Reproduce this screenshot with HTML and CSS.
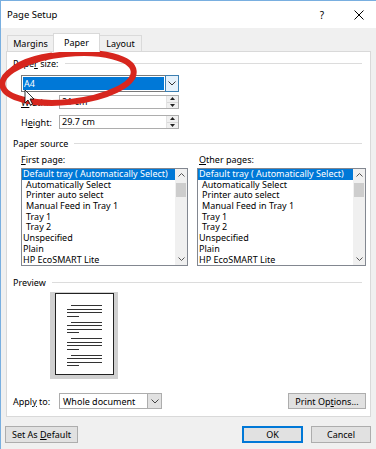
FILE: index.html
```html
<!DOCTYPE html>
<html lang="en">
<head>
    <meta charset="utf-8">
    <title>Page Setup</title>
    <link rel="stylesheet" href="styles.css">
</head>
<body>
    <div class="dialog">
        <div class="titlebar">
            <span class="title">Page Setup</span>
            <span class="help">?</span>
            <svg class="close" width="10" height="10" viewBox="0 0 10 10">
                <path d="M0.5 0.5L9.5 9.5M9.5 0.5L0.5 9.5" stroke="#000" stroke-width="1" fill="none"/>
            </svg>
        </div>

        <div class="tabs">
            <div class="tab">Margins</div>
            <div class="tab active">Paper</div>
            <div class="tab">Layout</div>
        </div>

        <div class="panel">
            <div class="group"><span>Pape<u>r</u> size:</span><i></i></div>
            <div class="combo combo-size">
                <div class="combo-value"><span class="sel">A4</span></div>
                <div class="combo-arrow blue">
                    <svg width="8" height="5" viewBox="0 0 8 5"><path d="M0.5 0.5L4 4L7.5 0.5" stroke="#333" fill="none"/></svg>
                </div>
            </div>
            <div class="field">
                <label><u>W</u>idth:</label>
                <div class="spin">
                    <span class="spin-value">21 cm</span>
                    <div class="spin-btns">
                        <div class="spin-btn"><svg width="5" height="3" viewBox="0 0 5 3"><path d="M2.5 0L5 3H0Z" fill="#222"/></svg></div>
                        <div class="spin-btn"><svg width="5" height="3" viewBox="0 0 5 3"><path d="M0 0H5L2.5 3Z" fill="#222"/></svg></div>
                    </div>
                </div>
            </div>
            <div class="field">
                <label>H<u>e</u>ight:</label>
                <div class="spin">
                    <span class="spin-value">29.7 cm</span>
                    <div class="spin-btns">
                        <div class="spin-btn"><svg width="5" height="3" viewBox="0 0 5 3"><path d="M2.5 0L5 3H0Z" fill="#222"/></svg></div>
                        <div class="spin-btn"><svg width="5" height="3" viewBox="0 0 5 3"><path d="M0 0H5L2.5 3Z" fill="#222"/></svg></div>
                    </div>
                </div>
            </div>

            <div class="group source"><span>Paper source</span><i></i></div>
            <div class="lists">
                <div class="list-col">
                    <div class="list-label"><u>F</u>irst page:</div>
                    <div class="listbox">
                        <div class="items">
                            <div class="item selected">Default tray ( Automatically Select)</div>
                            <div class="item indent">Automatically Select</div>
                            <div class="item indent">Printer auto select</div>
                            <div class="item indent">Manual Feed in Tray 1</div>
                            <div class="item indent">Tray 1</div>
                            <div class="item indent">Tray 2</div>
                            <div class="item">Unspecified</div>
                            <div class="item">Plain</div>
                            <div class="item">HP EcoSMART Lite</div>
                        </div>
                        <div class="scrollbar">
                            <svg class="sb-arrow" width="7" height="4" viewBox="0 0 7 4"><path d="M0.5 3.5L3.5 0.5L6.5 3.5" stroke="#555" fill="none"/></svg>
                            <div class="thumb"></div>
                            <svg class="sb-arrow down" width="7" height="4" viewBox="0 0 7 4"><path d="M0.5 0.5L3.5 3.5L6.5 0.5" stroke="#555" fill="none"/></svg>
                        </div>
                    </div>
                </div>
                <div class="list-col">
                    <div class="list-label right"><u>O</u>ther pages:</div>
                    <div class="listbox">
                        <div class="items">
                            <div class="item selected">Default tray ( Automatically Select)</div>
                            <div class="item indent">Automatically Select</div>
                            <div class="item indent">Printer auto select</div>
                            <div class="item indent">Manual Feed in Tray 1</div>
                            <div class="item indent">Tray 1</div>
                            <div class="item indent">Tray 2</div>
                            <div class="item">Unspecified</div>
                            <div class="item">Plain</div>
                            <div class="item">HP EcoSMART Lite</div>
                        </div>
                        <div class="scrollbar">
                            <svg class="sb-arrow" width="7" height="4" viewBox="0 0 7 4"><path d="M0.5 3.5L3.5 0.5L6.5 3.5" stroke="#555" fill="none"/></svg>
                            <div class="thumb"></div>
                            <svg class="sb-arrow down" width="7" height="4" viewBox="0 0 7 4"><path d="M0.5 0.5L3.5 3.5L6.5 0.5" stroke="#555" fill="none"/></svg>
                        </div>
                    </div>
                </div>
            </div>

            <div class="group preview-group"><span>Preview</span><i></i></div>
            <div class="preview">
                <div class="page">
                    <div class="para"><b class="first"></b><b></b><b></b><b class="short"></b></div>
                    <div class="para"><b class="first"></b><b></b><b></b><b class="short"></b></div>
                    <div class="para"><b class="first"></b><b></b><b></b><b class="short"></b></div>
                    <div class="para"><b class="first"></b><b></b><b></b><b class="short"></b></div>
                </div>
            </div>

            <div class="apply-row">
                <label>Appl<u>y</u> to:</label>
                <div class="combo combo-apply">
                    <div class="combo-value">Whole document</div>
                    <div class="combo-arrow">
                        <svg width="8" height="5" viewBox="0 0 8 5"><path d="M0.5 0.5L4 4L7.5 0.5" stroke="#444" fill="none"/></svg>
                    </div>
                </div>
                <button class="btn btn-options">Print Op<u>t</u>ions...</button>
            </div>
        </div>

        <div class="footer">
            <button class="btn btn-default">Set As <u>D</u>efault</button>
            <button class="btn btn-ok">OK</button>
            <button class="btn btn-cancel">Cancel</button>
        </div>
    </div>

    <!-- hand drawn marker over the paper size box -->
    <svg class="markup" width="376" height="449" viewBox="0 0 376 449">
        <ellipse cx="68" cy="78" rx="66" ry="24" transform="rotate(-6 68 78)" fill="none" stroke="#d7261e" stroke-width="6"/>
        <path d="M4 80 C 8 67, 24 58, 52 54" fill="none" stroke="#d7261e" stroke-width="3"/>
        <path d="M25 90 L25 103 L28 100 L30.5 105 L32.5 104 L30 99 L34 99 Z" fill="#fff" stroke="#000" stroke-width="0.8"/>
    </svg>
</body>
</html>
```

FILE: styles.css
```css
body {
    margin: 0;
    padding: 0;
    background-color: #f0f0f0;
    font-family: 'Noto Sans', 'Liberation Sans', sans-serif;
    font-size: 9px;
    color: #000;
    position: relative;
}

u {
    text-decoration: underline;
    text-underline-offset: 1px;
}

.dialog {
    width: 376px;
    height: 449px;
    box-sizing: border-box;
    border-top: 1px solid #79afe0;
    border-left: 1px solid #79afe0;
    display: flex;
    flex-direction: column;
}

.titlebar {
    height: 27px;
    flex-shrink: 0;
    background-color: #fff;
    display: flex;
    align-items: center;
    padding: 0 12px 0 6px;
}

.title {
    font-size: 9.5px;
}

.help {
    margin-left: auto;
    margin-right: 30px;
    font-size: 10px;
}

.close {
    display: block;
}

.tabs {
    height: 23px;
    flex-shrink: 0;
    display: flex;
    align-items: flex-end;
    padding-left: 6px;
}

.tab {
    height: 16px;
    line-height: 15px;
    box-sizing: border-box;
    padding: 0 5px;
    border: 1px solid #dadada;
    border-bottom: none;
    text-align: center;
}

.tab:first-child {
    width: 46px;
    border-right: none;
}

.tab.active {
    position: relative;
    z-index: 1;
    width: 47px;
    height: 19px;
    line-height: 18px;
    margin-bottom: -1px;
    background-color: #fff;
    border-color: #d9d9d9;
}

.tab:last-child {
    width: 42px;
    border-left: none;
}

.panel {
    height: 366px;
    box-sizing: border-box;
    margin: 0 5px;
    padding: 5px 4px 0 6px;
    background-color: #fff;
    border: 1px solid #d9d9d9;
}

.group {
    height: 12px;
    display: flex;
    align-items: center;
    gap: 6px;
    margin-right: 4px;
}

.group i {
    flex: 1;
    height: 1px;
    background-color: #dcdcdc;
}

.group.source {
    margin-top: 8px;
}

.group.preview-group {
    margin-top: 10px;
}

.combo {
    display: flex;
    box-sizing: border-box;
    border: 1px solid #adadad;
    background-color: #fff;
}

.combo-size {
    width: 158px;
    height: 17px;
    margin: 6px 0 0 8px;
    border-color: #7a7a7a;
}

.combo-value {
    flex: 1;
    display: flex;
    align-items: center;
    padding: 1px;
}

.combo-value .sel {
    flex: 1;
    height: 13px;
    line-height: 13px;
    padding-left: 1px;
    background-color: #0078d7;
    color: #fff;
}

.combo-arrow {
    width: 12px;
    display: flex;
    align-items: center;
    justify-content: center;
    background-color: #e1e1e1;
    border-left: 1px solid #adadad;
}

.combo-arrow.blue {
    background-color: #e5f1fb;
    border: 1px solid #3c7fb1;
    margin: -1px -1px -1px 0;
}

.field {
    display: flex;
    align-items: center;
    margin: 3px 0 0 8px;
    height: 14px;
}

.field + .field {
    margin-top: 6px;
}

.field label {
    width: 38px;
}

.spin {
    width: 120px;
    height: 14px;
    box-sizing: border-box;
    display: flex;
    border: 1px solid #adadad;
}

.spin-value {
    flex: 1;
    line-height: 12px;
    padding-left: 2px;
}

.spin-btns {
    width: 11px;
    display: flex;
    flex-direction: column;
    border-left: 1px solid #e3e3e3;
}

.spin-btn {
    flex: 1;
    display: flex;
    align-items: center;
    justify-content: center;
    background-color: #f0f0f0;
}

.spin-btn + .spin-btn {
    border-top: 1px solid #d9d9d9;
}

.spin-btn svg {
    display: block;
}

.lists {
    display: grid;
    grid-template-columns: 167px 1fr;
    column-gap: 9px;
    padding-left: 8px;
    margin-top: 5px;
}

.list-label {
    height: 12px;
    line-height: 12px;
    margin-bottom: 2px;
}

.list-label.right {
    padding-left: 2px;
}

.listbox {
    height: 98px;
    box-sizing: border-box;
    display: flex;
    border: 1px solid #828790;
    overflow: hidden;
}

.items {
    flex: 1;
    min-width: 0;
}

.item {
    height: 10.7px;
    line-height: 10.7px;
    padding-left: 1px;
    white-space: nowrap;
}

.item.indent {
    padding-left: 4px;
}

.item.selected {
    background-color: #0078d7;
    color: #fff;
}

.scrollbar {
    width: 12px;
    position: relative;
    background-color: #f0f0f0;
    display: flex;
    flex-direction: column;
    align-items: center;
}

.sb-arrow {
    display: block;
    margin-top: 4px;
}

.sb-arrow.down {
    margin-top: auto;
    margin-bottom: 4px;
}

.thumb {
    width: 10px;
    height: 14px;
    margin-top: 6px;
    background-color: #cdcdcd;
}

.preview {
    width: 68px;
    height: 87px;
    box-sizing: border-box;
    margin: 4px 0 0 37px;
    padding: 1px 4px 4px 5px;
    background-color: #d0d0d0;
}

.page {
    height: 100%;
    box-sizing: border-box;
    border: 1px solid #222;
    background-color: #fff;
    padding: 11px 0 0 11px;
    display: flex;
    flex-direction: column;
    gap: 5px;
}

.para {
    display: flex;
    flex-direction: column;
    gap: 2.5px;
}

.para b {
    display: block;
    width: 35px;
    height: 1px;
    background-color: #333;
}

.para b.first {
    width: 31px;
    margin-left: 4px;
}

.para b.short {
    width: 12px;
}

.apply-row {
    display: flex;
    align-items: center;
    margin-top: 14px;
    height: 16px;
}

.apply-row label {
    width: 46px;
}

.combo-apply {
    width: 103px;
    height: 16px;
}

.combo-apply .combo-value {
    padding-left: 3px;
}

.combo-apply .combo-arrow {
    width: 13px;
}

.btn {
    font-family: inherit;
    font-size: 9px;
    color: #000;
    background-color: #e1e1e1;
    border: 1px solid #adadad;
    padding: 0;
    margin: 0;
    height: 17px;
}

.btn-options {
    margin-left: auto;
    width: 78px;
    height: 16px;
}

.footer {
    flex: 1;
    display: flex;
    align-items: flex-start;
    padding: 9px 5px 0 4px;
}

.btn-default {
    width: 73px;
}

.btn-ok {
    margin-left: auto;
    width: 61px;
    border: 2px solid #0078d7;
}

.btn-cancel {
    margin-left: 8px;
    width: 60px;
}

.markup {
    position: absolute;
    top: 0;
    left: 0;
    pointer-events: none;
}
```
